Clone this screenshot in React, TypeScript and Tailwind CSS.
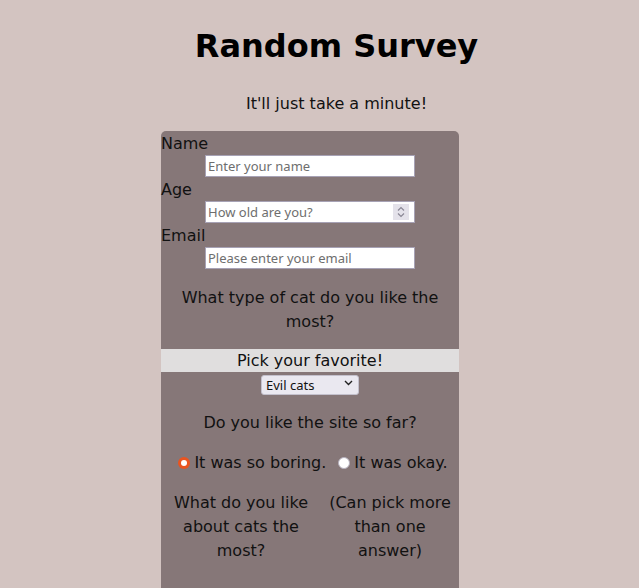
import React from "react";

function Field({ label, placeholder, spinner }: { label: string; placeholder: string; spinner?: boolean }) {
  return (
    <div>
      <div className="h-6 pt-[1px] leading-6 text-[16px]">{label}</div>
      <div className="mx-auto flex h-[22px] w-[210px] items-center border border-[#a7a2b5] bg-white">
        <input
          type="text"
          placeholder={placeholder}
          className="h-full min-w-0 flex-1 bg-white pl-[2px] text-[13px] text-[#333] outline-none placeholder:text-[#6e6e6e]"
          style={{ fontFamily: '"Noto Sans", "Open Sans", sans-serif' }}
        />
        {spinner && (
          <div className="mr-[5px] flex h-[16px] w-[16px] items-center justify-center bg-[#e4e2ea]">
            <svg width="10" height="14" viewBox="0 0 10 14" fill="none" stroke="#8a8795" strokeWidth="1.2">
              <path d="M2 5.5 L5 2.5 L8 5.5" />
              <path d="M2 8.5 L5 11.5 L8 8.5" />
            </svg>
          </div>
        )}
      </div>
    </div>
  );
}

export default function App() {
  return (
    <div
      className="min-h-[588px] w-[639px] bg-[#d3c4c1] text-[#111]"
      style={{ fontFamily: '"DejaVu Sans", sans-serif' }}
    >
      <div className="pl-[34px] pt-[28px] text-center">
        <h1 className="h-[37px] text-[32px] font-bold leading-[37px] text-black">Random Survey</h1>
        <p className="mt-[27px] h-6 text-[16px] leading-6">It'll just take a minute!</p>
      </div>
      <div className="ml-[161px] mt-[15px] w-[298px] rounded-t-[5px] bg-[#867778] pb-10">
        <Field label="Name" placeholder="Enter your name" />
        <Field label="Age" placeholder="How old are you?" spinner />
        <Field label="Email" placeholder="Please enter your email" />
        <p className="mb-[15px] mt-4 px-4 pt-[1px] text-center text-[16px] leading-6">What type of cat do you like the most?</p>
        <div className="h-[23px] bg-[#e0dede] text-center text-[16px] leading-[23px]">Pick your favorite!</div>
        <div className="mt-[1px] flex justify-center">
          <div className="relative h-[20px] w-[98px]">
            <select
              defaultValue="evil"
              className="h-full w-full appearance-none rounded-[3px] border border-[#c3c0cc] bg-[#eae8f0] pl-[4px] text-[13px] leading-[18px] text-[#111] outline-none"
              style={{ fontFamily: '"Noto Sans", "Open Sans", sans-serif' }}
            >
              <option value="evil">Evil cats</option>
              <option value="cute">Cute cats</option>
            </select>
            <svg
              className="pointer-events-none absolute right-[6px] top-[7px]"
              width="9"
              height="6"
              viewBox="0 0 9 6"
              fill="none"
              stroke="#222"
              strokeWidth="1.4"
            >
              <path d="M1 1 L4.5 4.5 L8 1" />
            </svg>
          </div>
        </div>
        <p className="mt-[18px] text-center text-[16px] leading-6">Do you like the site so far?</p>
        <div className="mt-4 flex h-6 items-center justify-center pl-[6px] text-[16px] leading-6">
          <span className="flex h-[12px] w-[12px] items-center justify-center rounded-full bg-[#e95420]">
            <span className="h-[6px] w-[6px] rounded-full bg-white" />
          </span>
          <span className="ml-[4px]">It was so boring.</span>
          <span className="ml-[12px] h-[12px] w-[12px] rounded-full border border-[#b5b0bd] bg-white" />
          <span className="ml-[4px]">It was okay.</span>
        </div>
        <div className="mt-4 grid grid-cols-[160px_138px] text-center text-[16px] leading-6">
          <p className="px-[8px]">What do you like about cats the most?</p>
          <p className="px-[6px]">(Can pick more than one answer)</p>
        </div>
      </div>
    </div>
  );
}
